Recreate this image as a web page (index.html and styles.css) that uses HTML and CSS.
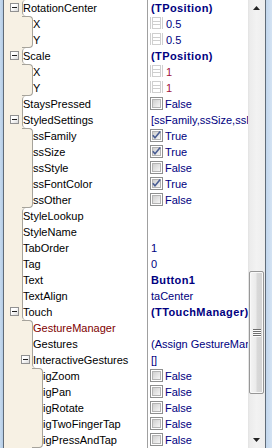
FILE: index.html
```
<!DOCTYPE html>
<html>
<head>
<meta charset="utf-8">
<link rel="stylesheet" href="styles.css">
</head>
<body>
<div class="frame">
  <div class="edge-l"></div>
  <div class="list">
    <div class="row"><div class="nc"><div class="gut"><span class="box"></span></div><div class="name top bot">RotationCenter</div></div><div class="val b">(TPosition)</div></div>
    <div class="row edge"><div class="nc"><div class="gut"></div><div class="ind first"></div><div class="name nl">X</div></div><div class="val c"><svg class="ic" width="13" height="12" viewBox="0 0 13 12"><path d="M0.5 0v12M2.5 0v12M10.5 0v12M12.5 0v12M2.5 0.5h8M2.5 11.5h8M2.5 4.5h8M2.5 7.5h8" stroke="#cfcfcf" fill="none"/></svg><span>0.5</span></div></div>
    <div class="row edge"><div class="nc"><div class="gut"></div><div class="ind last"></div><div class="name nl">Y</div></div><div class="val c"><svg class="ic" width="13" height="12" viewBox="0 0 13 12"><path d="M0.5 0v12M2.5 0v12M10.5 0v12M12.5 0v12M2.5 0.5h8M2.5 11.5h8M2.5 4.5h8M2.5 7.5h8" stroke="#cfcfcf" fill="none"/></svg><span>0.5</span></div></div>
    <div class="row"><div class="nc"><div class="gut"><span class="box"></span></div><div class="name top bot">Scale</div></div><div class="val b">(TPosition)</div></div>
    <div class="row edge"><div class="nc"><div class="gut"></div><div class="ind first"></div><div class="name nl">X</div></div><div class="val c"><svg class="ic" width="13" height="12" viewBox="0 0 13 12"><path d="M0.5 0v12M2.5 0v12M10.5 0v12M12.5 0v12M2.5 0.5h8M2.5 11.5h8M2.5 4.5h8M2.5 7.5h8" stroke="#cfcfcf" fill="none"/></svg><span class="red">1</span></div></div>
    <div class="row edge"><div class="nc"><div class="gut"></div><div class="ind last"></div><div class="name nl">Y</div></div><div class="val c"><svg class="ic" width="13" height="12" viewBox="0 0 13 12"><path d="M0.5 0v12M2.5 0v12M10.5 0v12M12.5 0v12M2.5 0.5h8M2.5 11.5h8M2.5 4.5h8M2.5 7.5h8" stroke="#cfcfcf" fill="none"/></svg><span class="red">1</span></div></div>
    <div class="row"><div class="nc"><div class="gut"></div><div class="name top">StaysPressed</div></div><div class="val c"><span class="cb"><i></i></span><span>False</span></div></div>
    <div class="row"><div class="nc"><div class="gut"><span class="box"></span></div><div class="name bot">StyledSettings</div></div><div class="val">[ssFamily,ssSize,ssFontColor]</div></div>
    <div class="row edge"><div class="nc"><div class="gut"></div><div class="ind first"></div><div class="name nl">ssFamily</div></div><div class="val c"><span class="cb"><i><svg width="7" height="7" viewBox="0 0 7 7"><path d="M-0.2 3.2 L2 5.8 L7.2 -0.4" stroke="#4a5e94" stroke-width="1.6" fill="none"/></svg></i></span><span>True</span></div></div>
    <div class="row"><div class="nc"><div class="gut"></div><div class="ind"></div><div class="name">ssSize</div></div><div class="val c"><span class="cb"><i><svg width="7" height="7" viewBox="0 0 7 7"><path d="M-0.2 3.2 L2 5.8 L7.2 -0.4" stroke="#4a5e94" stroke-width="1.6" fill="none"/></svg></i></span><span>True</span></div></div>
    <div class="row"><div class="nc"><div class="gut"></div><div class="ind"></div><div class="name">ssStyle</div></div><div class="val c"><span class="cb"><i></i></span><span>False</span></div></div>
    <div class="row"><div class="nc"><div class="gut"></div><div class="ind"></div><div class="name">ssFontColor</div></div><div class="val c"><span class="cb"><i><svg width="7" height="7" viewBox="0 0 7 7"><path d="M-0.2 3.2 L2 5.8 L7.2 -0.4" stroke="#4a5e94" stroke-width="1.6" fill="none"/></svg></i></span><span>True</span></div></div>
    <div class="row edge"><div class="nc"><div class="gut"></div><div class="ind last"></div><div class="name nl">ssOther</div></div><div class="val c"><span class="cb"><i></i></span><span>False</span></div></div>
    <div class="row"><div class="nc"><div class="gut"></div><div class="name top">StyleLookup</div></div><div class="val"></div></div>
    <div class="row"><div class="nc"><div class="gut"></div><div class="name">StyleName</div></div><div class="val"></div></div>
    <div class="row"><div class="nc"><div class="gut"></div><div class="name">TabOrder</div></div><div class="val">1</div></div>
    <div class="row"><div class="nc"><div class="gut"></div><div class="name">Tag</div></div><div class="val">0</div></div>
    <div class="row"><div class="nc"><div class="gut"></div><div class="name">Text</div></div><div class="val b">Button1</div></div>
    <div class="row"><div class="nc"><div class="gut"></div><div class="name">TextAlign</div></div><div class="val">taCenter</div></div>
    <div class="row"><div class="nc"><div class="gut"><span class="box"></span></div><div class="name bot">Touch</div></div><div class="val b">(TTouchManager)</div></div>
    <div class="row edge"><div class="nc"><div class="gut"></div><div class="ind first"></div><div class="name nl ref">GestureManager</div></div><div class="val"></div></div>
    <div class="row"><div class="nc"><div class="gut"></div><div class="ind"></div><div class="name">Gestures</div></div><div class="val">(Assign GestureManager)</div></div>
    <div class="row"><div class="nc"><div class="gut"></div><div class="ind"><span class="box in"></span></div><div class="name bot">InteractiveGestures</div></div><div class="val">[]</div></div>
    <div class="row edge"><div class="nc"><div class="gut"></div><div class="ind"></div><div class="ind first"></div><div class="name nl">igZoom</div></div><div class="val c"><span class="cb"><i></i></span><span>False</span></div></div>
    <div class="row"><div class="nc"><div class="gut"></div><div class="ind"></div><div class="ind"></div><div class="name">igPan</div></div><div class="val c"><span class="cb"><i></i></span><span>False</span></div></div>
    <div class="row"><div class="nc"><div class="gut"></div><div class="ind"></div><div class="ind"></div><div class="name">igRotate</div></div><div class="val c"><span class="cb"><i></i></span><span>False</span></div></div>
    <div class="row"><div class="nc"><div class="gut"></div><div class="ind"></div><div class="ind"></div><div class="name">igTwoFingerTap</div></div><div class="val c"><span class="cb"><i></i></span><span>False</span></div></div>
    <div class="row edge"><div class="nc"><div class="gut"></div><div class="ind"></div><div class="ind last"></div><div class="name nl">igPressAndTap</div></div><div class="val c"><span class="cb"><i></i></span><span>False</span></div></div>
  </div>
  <div class="sb">
    <div class="sbb up"><svg width="7" height="4" viewBox="0 0 7 4"><path d="M3.5 0L7 4H0Z" fill="#222"/></svg></div>
    <div class="track">
      <div class="thumb"><div class="grip"><i></i><i></i><i></i><i></i></div></div>
    </div>
    <div class="sbb down"><svg width="7" height="4" viewBox="0 0 7 4"><path d="M0 0H7L3.5 4Z" fill="#222"/></svg></div>
  </div>
  <div class="edge-r"></div>
</div>
</body>
</html>
```
FILE: styles.css
```
html, body {
  margin: 0;
  padding: 0;
  background: #fff;
}
body {
  width: 272px;
  height: 448px;
  overflow: hidden;
  font-family: "Liberation Sans", Arial, sans-serif;
  font-size: 11px;
}
.frame {
  display: flex;
  height: 448px;
}
.edge-l {
  width: 4px;
  flex: none;
  background: linear-gradient(to right, #c6daee 0, #b4cce6 3px, #5f6b78 3px);
}
.edge-r {
  width: 7px;
  flex: none;
  background: linear-gradient(to right, #5f6b78 0, #5f6b78 1px, #c2d6ec 1px, #d4e3f3);
}
.list {
  width: 244px;
  flex: none;
  display: flex;
  flex-direction: column;
  overflow: hidden;
}
.row {
  display: flex;
  height: 16px;
  flex: none;
  background: #f7f1e4;
}
.row.edge {
  background: #fff;
}
.nc {
  display: flex;
  width: 144px;
  flex: none;
}
.gut {
  width: 18px;
  flex: none;
  background: #f7f1e4;
}
.ind {
  width: 10px;
  flex: none;
  box-sizing: border-box;
  background: #f7f1e4;
}
.ind.first {
  width: 11px;
  border-top: 1px solid #a6a39b;
  border-right: 1px solid #a6a39b;
  border-top-right-radius: 4px;
}
.ind.last {
  width: 11px;
  border-bottom: 1px solid #a6a39b;
  border-right: 1px solid #a6a39b;
  border-bottom-right-radius: 4px;
}
.name {
  flex: 1;
  min-width: 0;
  background: #fff;
  border-left: 1px solid #a6a39b;
  border-right: 1px solid #a0a0a0;
  line-height: 16px;
  white-space: nowrap;
  overflow: hidden;
  color: #000;
}
.name.nl {
  border-left: 0;
}
.name.top {
  border-top-left-radius: 4px;
}
.name.bot {
  border-bottom-left-radius: 4px;
}
.name.ref {
  color: #800000;
}
.box {
  display: block;
  position: relative;
  width: 9px;
  height: 9px;
  box-sizing: border-box;
  margin: 3px 0 0 6px;
  border: 1px solid #919191;
  background: linear-gradient(135deg, #ffffff 35%, #dadada);
}
.box.in {
  margin-left: -1px;
}
.box::after {
  content: "";
  position: absolute;
  left: 1px;
  top: 3px;
  width: 5px;
  height: 1px;
  background: #1e1e1e;
}
.val {
  flex: 1;
  min-width: 0;
  display: flex;
  align-items: flex-start;
  background: #fff;
  padding-left: 3px;
  color: #000080;
  line-height: 16px;
  white-space: nowrap;
  overflow: hidden;
}
.val.c {
  padding-left: 2px;
}
.b {
  font-weight: bold;
  letter-spacing: 0.4px;
}
.red {
  color: #a0103c;
}
.ic {
  display: block;
  flex: none;
  margin: 1px 3px 0 0;
}
.cb {
  display: block;
  flex: none;
  width: 13px;
  height: 13px;
  box-sizing: border-box;
  margin: 1px 2px 0 0;
  border: 1px solid #8e8f8f;
  padding: 1px;
  background: #fff;
}
.cb i {
  display: block;
  width: 9px;
  height: 9px;
  box-sizing: border-box;
  border: 1px solid #b3b3b3;
  background: linear-gradient(135deg, #cfcfcf, #f6f6f6);
}
.cb svg {
  display: block;
  overflow: visible;
}
.sb {
  width: 17px;
  flex: none;
  display: flex;
  flex-direction: column;
  background: linear-gradient(to right, #e2e2e2, #ececec 2px, #f2f2f2 50%, #ededed);
}
.sbb {
  height: 17px;
  flex: none;
  display: flex;
  justify-content: center;
  box-sizing: border-box;
}
.sbb.up {
  padding-top: 6px;
}
.sbb.down {
  padding-top: 7px;
}
.sbb svg {
  display: block;
}
.track {
  flex: 1;
  display: flex;
  flex-direction: column;
}
.thumb {
  margin: 254px 1px 0 1px;
  height: 123px;
  box-sizing: border-box;
  border: 1px solid #979797;
  border-radius: 2px;
  background: linear-gradient(to right, #f4f4f4, #ebebeb 45%, #d9d9d9 55%, #d2d2d2);
  box-shadow: inset 0 0 0 1px #f8f8f8;
  display: flex;
  align-items: center;
  justify-content: center;
}
.grip {
  display: flex;
  flex-direction: column;
  width: 8px;
}
.grip i {
  display: block;
  height: 1px;
  background: #6e6e6e;
  border-bottom: 1px solid #fcfcfc;
}
```
